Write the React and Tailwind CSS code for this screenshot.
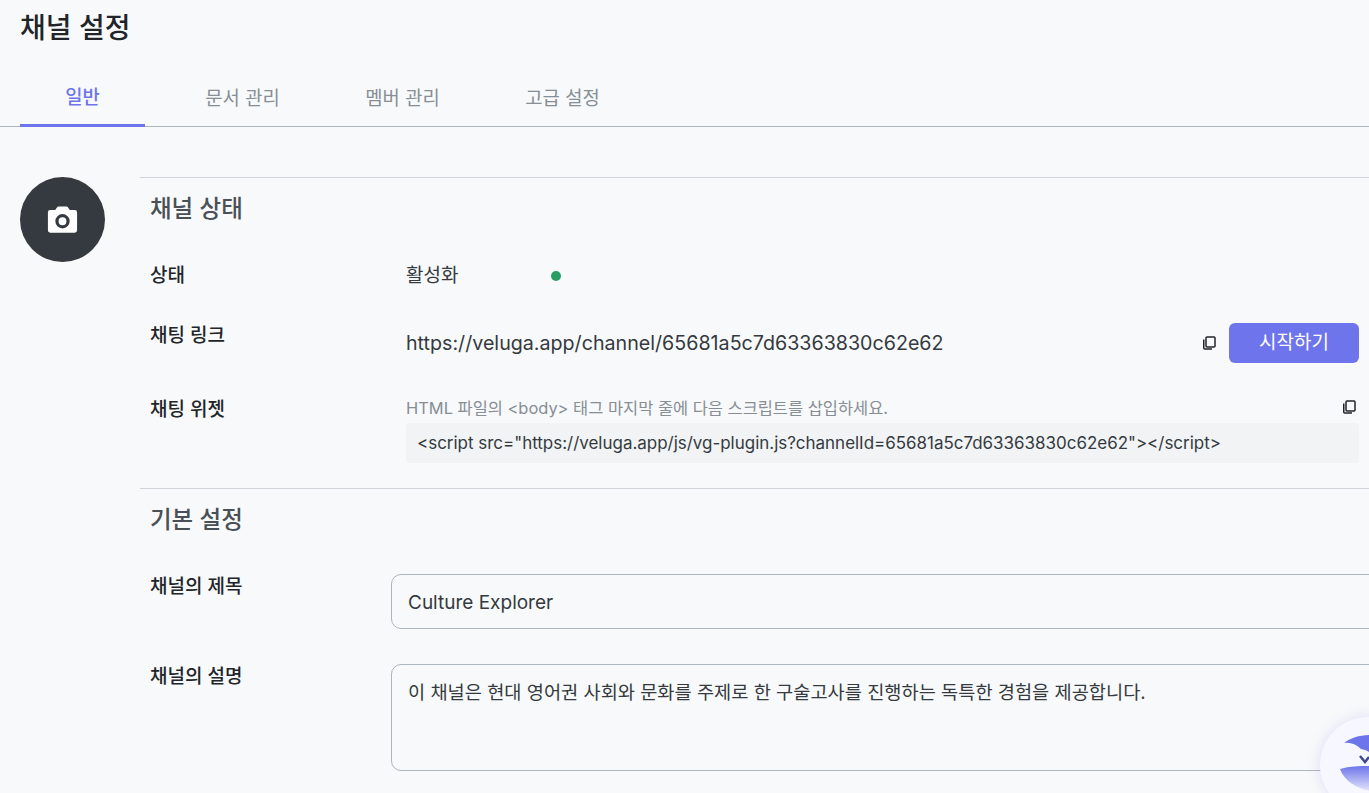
function CopyIcon() {
  return (
    <svg width="16" height="16" viewBox="0 0 16 16" fill="none" stroke="#1f2329" strokeWidth="1.5" className="shrink-0">
      <rect x="5" y="2" width="9" height="10" rx="1" />
      <path d="M2.75 4.5V13a1 1 0 0 0 1 1H11" />
    </svg>
  );
}
function Row({ label, className, wide, labelClass, children }) {
  return (
    <div className={"flex " + (className || "")}>
      <div className={(wide ? "w-[266px]" : "w-[256px]") + " shrink-0 pl-[10px] text-[19px] font-medium leading-[24px] text-[#212529] " + (labelClass || "pt-[1px]")}>{label}</div>
      <div className="min-w-0 flex-1">{children}</div>
    </div>
  );
}
export default function App() {
  return (
    <div className="relative h-[793px] w-[1369px] overflow-hidden bg-[#f8f9fa] font-['Inter','Noto_Sans_CJK_KR',sans-serif] text-[#212529]">
      <h1 className="pl-5 pt-[9px] text-[28px] font-medium leading-[38px] text-[#212529]">채널 설정</h1>
      <div className="mt-[32px] flex h-[48px] border-b border-[#adb5bd] pl-5 text-[18.8px]">
        <div className="h-[48px] w-[125px] border-b-[3px] border-[#6e74eb] pb-1 text-center font-medium leading-[38px] text-[#6e74eb]">일반</div>
        <div className="ml-[35px] w-[125px] text-center leading-[40px] text-[#868e96]">문서 관리</div>
        <div className="ml-[35px] w-[125px] text-center leading-[40px] text-[#868e96]">멤버 관리</div>
        <div className="ml-[35px] w-[125px] text-center leading-[40px] text-[#868e96]">고급 설정</div>
      </div>
      <div className="flex pl-5 pt-[50px]">
        <div className="flex h-[85px] w-[85px] shrink-0 items-center justify-center rounded-full bg-[#343a40]">
          <svg width="35" height="35" viewBox="0 0 24 24" fill="#fff">
            <path fillRule="evenodd" d="M8.2 3.7 7 5.5H3.6A1.6 1.6 0 0 0 2 7.1v12.3A1.6 1.6 0 0 0 3.6 21h16.8a1.6 1.6 0 0 0 1.6-1.6V7.1a1.6 1.6 0 0 0-1.6-1.6H17l-1.2-1.8a1.5 1.5 0 0 0-1.2-.7H9.4a1.5 1.5 0 0 0-1.2.7ZM12 8.3a4.9 4.9 0 1 1 0 9.8 4.9 4.9 0 0 1 0-9.8Zm0 2.2a2.7 2.7 0 1 0 0 5.4 2.7 2.7 0 0 0 0-5.4Z" />
          </svg>
        </div>
        <div className="ml-[35px] min-w-0 flex-1">
          <section className="h-[312px] border-t border-b border-[#ced4da]">
            <h2 className="pl-[10px] pt-[13px] text-[23.5px] font-medium leading-[36px] text-[#495057]">채널 상태</h2>
            <Row wide label="상태" className="mt-[36px] h-[59px]">
              <div className="flex text-[19px] leading-[24px] text-[#343a40]">
                <span className="w-[145px] pt-[1px]">활성화</span>
                <span className="mt-[8px] h-[10px] w-[10px] rounded-full bg-[#2a9d63]" />
              </div>
            </Row>
            <Row wide label="채팅 링크" labelClass="pt-[2px]" className="h-[74px]">
              <div className="flex items-start pr-[10px]">
                <span className="mt-[7px] flex-1 text-[19.66px] leading-[28px] text-[#343a40]">https://veluga.app/channel/65681a5c7d63363830c62e62</span>
                <span className="mt-[13px]"><CopyIcon /></span>
                <button className="ml-[12px] mt-[1px] h-[40px] w-[130px] rounded-[6px] bg-[#6e74eb] text-[19px] text-white">시작하기</button>
              </div>
            </Row>
            <Row wide label="채팅 위젯" labelClass="pt-[2px]">
              <div className="pr-[10px]">
                <div className="flex h-[22px] items-center justify-between pr-[2px] text-[16.43px] text-[#868e96]">
                  <span className="pt-[2px] leading-[22px]">HTML 파일의 &lt;body&gt; 태그 마지막 줄에 다음 스크립트를 삽입하세요.</span>
                  <CopyIcon />
                </div>
                <div className="mt-[5px] h-[40px] rounded-[4px] bg-[#f1f3f5] px-[11px] text-[16.97px] leading-[40px] text-[#343a40]">
                  &lt;script src="https://veluga.app/js/vg-plugin.js?channelId=65681a5c7d63363830c62e62"&gt;&lt;/script&gt;
                </div>
              </div>
            </Row>
          </section>
          <section>
            <h2 className="pl-[10px] pt-[13px] text-[23.5px] font-medium leading-[36px] text-[#495057]">기본 설정</h2>
            <Row label="채널의 제목" className="mt-[36px]">
              <div className="ml-[-5px] flex h-[55px] w-[1000px] items-center rounded-[10px] border border-[#adb5bd] pl-[16px] pt-[3px] text-[19px] text-[#343a40]">Culture Explorer</div>
            </Row>
            <Row label="채널의 설명" labelClass="pt-[2px]" className="mt-[34px]">
              <div className="ml-[-5px] mt-[1px] h-[107px] w-[1000px] rounded-[10px] border border-[#adb5bd] pl-[16px] pt-[15px] text-[18.66px] leading-[26px] text-[#343a40]">이 채널은 현대 영어권 사회와 문화를 주제로 한 구술고사를 진행하는 독특한 경험을 제공합니다.</div>
            </Row>
          </section>
        </div>
      </div>
      <div className="absolute left-[1320px] top-[717px] h-[96px] w-[96px] overflow-hidden rounded-full bg-[#f7f8ff] shadow-[0_0_14px_rgba(110,116,235,0.2)]">
        <svg width="50" height="80" viewBox="0 0 50 80" className="absolute left-0 top-0">
          <defs>
            <linearGradient id="lo" x1="0" y1="0" x2="0" y2="1">
              <stop offset="0" stopColor="#6e74eb" />
              <stop offset="1" stopColor="#e4e5fb" />
            </linearGradient>
          </defs>
          <path d="M24 26C30 21 40 18 50 18V36C47 33 44 33 41 32C36 27 30 25 24 26Z" fill="#6e74eb" />
          <path d="M40 39l5 6 4-5" fill="none" stroke="#3d4699" strokeWidth="2.5" />
          <path d="M20 52C30 49 40 49 50 49V74C38 72 24 64 20 52Z" fill="url(#lo)" />
        </svg>
      </div>
    </div>
  );
}
